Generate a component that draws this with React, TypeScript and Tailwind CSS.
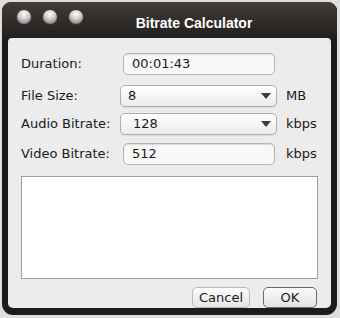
import React from 'react'

const font = { fontFamily: '"DejaVu Sans", "Lucida Grande", sans-serif' }

const Light = () => (
  <div className="w-[16px] h-[16px] rounded-full border border-[#3a3a3a] bg-[radial-gradient(circle_at_50%_30%,#fdfdfd_0%,#cfcfcf_40%,#858585_80%,#5e5e5e_100%)]" />
)

const Field = ({ value }: { value: string }) => (
  <div className="ml-[3px] w-[152px] h-full rounded-[5px] border border-[#b4b4b4] bg-[#f8f8f8] shadow-[inset_0_1px_1px_rgba(0,0,0,0.12)] pl-[8px] flex items-center text-[13px] text-[#1a1a1a]">
    {value}
  </div>
)

const Popup = ({ value, pad }: { value: string; pad: string }) => (
  <div className={`w-[157px] h-full rounded-[5px] border border-[#aeaeae] bg-linear-to-b from-[#ffffff] to-[#ececec] shadow-[0_1px_1px_rgba(0,0,0,0.08)] flex items-center justify-between pr-[5px] text-[13px] text-[#1a1a1a] ${pad}`}>
    <span>{value}</span>
    <svg width="10" height="6" viewBox="0 0 10 6">
      <path d="M0 0 L10 0 L5 6 Z" fill="#3c3c3c" />
    </svg>
  </div>
)

const Row = ({ label, children, unit, className }: { label: string; children: React.ReactNode; unit?: string; className: string }) => (
  <div className={`flex items-center h-[22px] ${className}`}>
    <div className="w-[99px] text-[13px] text-[#1a1a1a]">{label}</div>
    {children}
    {unit && <div className="ml-[9px] text-[13px] text-[#1a1a1a]">{unit}</div>}
  </div>
)

export default function App() {
  return (
    <div className="w-[340px] h-[318px] bg-[#dedede] pt-[2px] pl-[2px] overflow-hidden" style={font}>
      <div className="w-[335px] h-[313px] rounded-t-[9px] rounded-b-[11px] bg-[#1f1b19] flex flex-col">
        <div className="h-[36px] rounded-t-[9px] bg-linear-to-b from-[#433d39] to-[#231f1d] flex items-start pt-[7px] pl-[14px]">
          <div className="flex gap-[10px]">
            <Light />
            <Light />
            <Light />
          </div>
          <div className="ml-[30px] w-[160px] whitespace-nowrap text-center text-white font-bold text-[14px] leading-[18px] mt-[5px]" style={{ fontFamily: '"Liberation Sans", Arial, sans-serif' }}>
            Bitrate Calculator
          </div>
        </div>
        <div className="mx-[6px] h-[270px] rounded-t-[4px] rounded-b-[5px] bg-[#ececec] px-[13px] pt-[15px]">
          <Row label="Duration:" className="mb-[10px]">
            <Field value="00:01:43" />
          </Row>
          <Row label="File Size:" unit="MB" className="mb-[6px]">
            <Popup value="8" pad="pl-[7px]" />
          </Row>
          <Row label="Audio Bitrate:" unit="kbps" className="mb-[8px]">
            <Popup value="128" pad="pl-[12px]" />
          </Row>
          <Row label="Video Bitrate:" className="mb-[11px]">
            <Field value="512" />
            <div className="ml-[11px] text-[13px] text-[#1a1a1a]">kbps</div>
          </Row>
          <div className="w-[297px] h-[103px] border border-[#9e9e9e] bg-white mb-[8px]" />
          <div className="flex justify-end gap-[13px] pr-[1px]">
            <button className="w-[58px] h-[21px] rounded-[5px] border border-[#b8b8b8] bg-linear-to-b from-[#fbfbfb] to-[#e6e6e6] text-[13px] text-[#1a1a1a] leading-none">
              Cancel
            </button>
            <button className="w-[54px] h-[21px] rounded-[5px] border-[1.5px] border-[#6e6660] bg-linear-to-b from-[#fbfbfb] to-[#e4e4e4] text-[13px] text-[#1a1a1a] leading-none">
              OK
            </button>
          </div>
        </div>
      </div>
    </div>
  )
}
